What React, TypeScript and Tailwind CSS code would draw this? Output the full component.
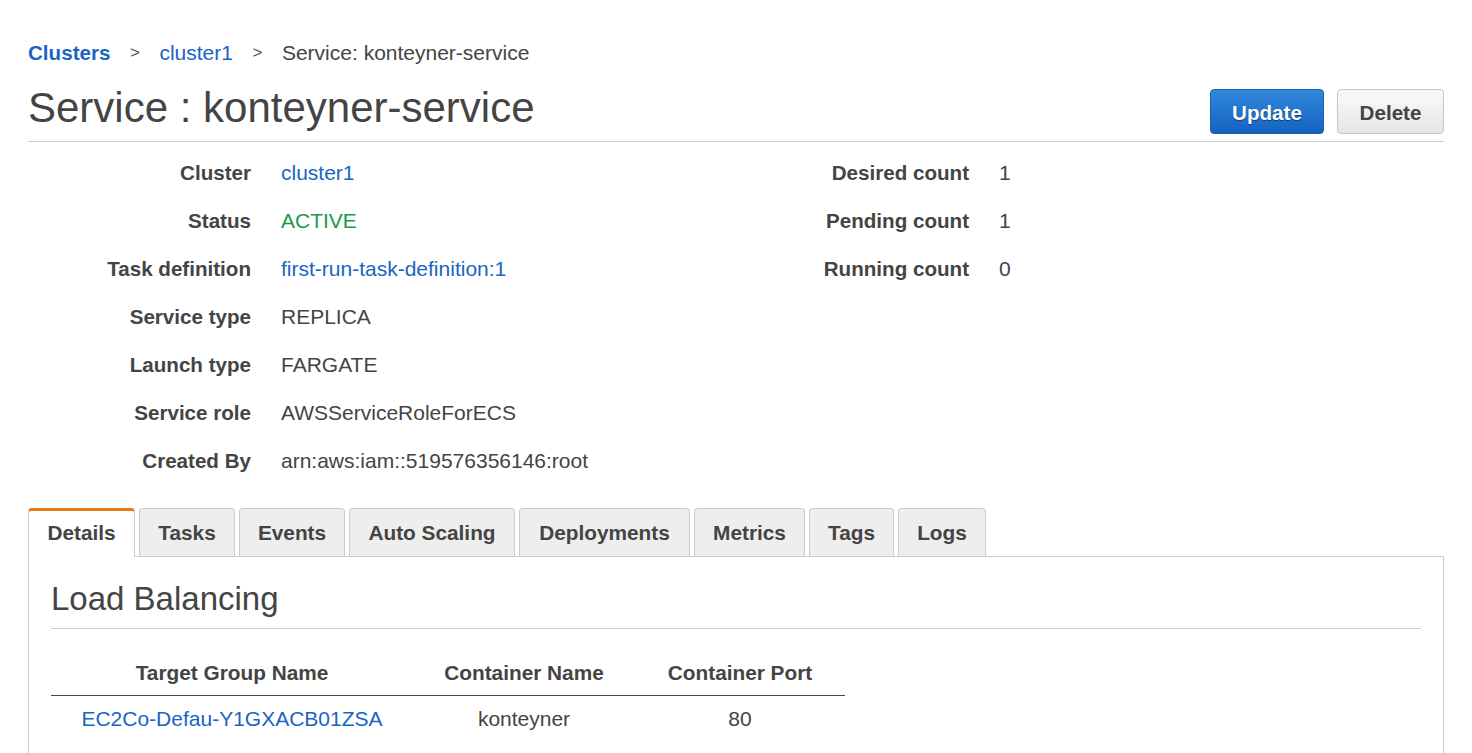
import React from "react";

const leftRows: [string, React.ReactNode][] = [
  ["Cluster", <span className="text-[#1a64c4]">cluster1</span>],
  ["Status", <span className="text-[#1d9a46]">ACTIVE</span>],
  ["Task definition", <span className="text-[#1a64c4]">first-run-task-definition:1</span>],
  ["Service type", "REPLICA"],
  ["Launch type", "FARGATE"],
  ["Service role", "AWSServiceRoleForECS"],
  ["Created By", "arn:aws:iam::519576356146:root"],
];

const rightRows: [string, string][] = [
  ["Desired count", "1"],
  ["Pending count", "1"],
  ["Running count", "0"],
];

const tabs: { label: string; w: string }[] = [
  { label: "Details", w: "w-[107px]" },
  { label: "Tasks", w: "w-[96px]" },
  { label: "Events", w: "w-[106px]" },
  { label: "Auto Scaling", w: "w-[166px]" },
  { label: "Deployments", w: "w-[171px]" },
  { label: "Metrics", w: "w-[111px]" },
  { label: "Tags", w: "w-[85px]" },
  { label: "Logs", w: "w-[88px]" },
];

export default function App() {
  return (
    <div
      className="min-h-[753px] bg-white px-[28px] pt-[41px] text-[#444] text-[21px]"
      style={{ fontFamily: '"Liberation Sans", Arial, sans-serif' }}
    >
      {/* breadcrumb */}
      <div className="flex h-[24px] items-center leading-[24px]">
        <span className="font-bold text-[20.6px] text-[#1a64c4]">Clusters</span>
        <span className="w-[49px] text-center text-[17px] text-[#555]">&gt;</span>
        <span className="text-[#1a64c4]">cluster1</span>
        <span className="w-[49px] text-center text-[17px] text-[#555]">&gt;</span>
        <span>Service: konteyner-service</span>
      </div>

      {/* header */}
      <div className="mt-[19px] flex h-[58px] items-start justify-between border-b border-[#ccc]">
        <h1 className="h-[48px] text-[42px] leading-[48px] text-[#444]">Service : konteyner-service</h1>
        <div className="mt-[5px] flex gap-[13px] text-[20.6px]">
          <button
            className="h-[45px] w-[114px] rounded-[4px] border border-[#1b5ea9] bg-gradient-to-b from-[#3187dc] to-[#1563c0] pt-[3px] font-bold text-white"
            style={{ textShadow: "0 1px 1px rgba(0,0,0,0.45)" }}
          >
            Update
          </button>
          <button className="h-[45px] w-[107px] rounded-[4px] border border-[#c6c6c6] bg-gradient-to-b from-[#fafafa] to-[#e6e6e6] pt-[3px] font-bold text-[#444]">
            Delete
          </button>
        </div>
      </div>

      {/* details */}
      <div className="flex pt-[7px]">
        <div className="grid w-[692px] grid-cols-[223px_1fr] gap-x-[30px]">
          {leftRows.map(([k, v]) => (
            <React.Fragment key={k}>
              <div className="h-[48px] text-right font-bold text-[20.6px] leading-[48px]">{k}</div>
              <div className="h-[48px] leading-[48px]">{v}</div>
            </React.Fragment>
          ))}
        </div>
        <div className="grid grid-cols-[249px_1fr] content-start gap-x-[30px]">
          {rightRows.map(([k, v]) => (
            <React.Fragment key={k}>
              <div className="h-[48px] text-right font-bold text-[20.6px] leading-[48px]">{k}</div>
              <div className="h-[48px] leading-[48px]">{v}</div>
            </React.Fragment>
          ))}
        </div>
      </div>

      {/* tabs */}
      <div className="relative z-10 mt-[23px] flex gap-[4px] text-[20.8px]">
        {tabs.map((t, i) =>
          i === 0 ? (
            <div
              key={t.label}
              className={`${t.w} h-[49px] rounded-t-[4px] border-x border-t-[3px] border-x-[#ccc] border-t-[#e47911] bg-white pt-[10px] text-center font-bold leading-[24px] text-[#444]`}
            >
              {t.label}
            </div>
          ) : (
            <div
              key={t.label}
              className={`${t.w} h-[48px] rounded-t-[4px] border-x border-t border-[#ccc] bg-[#eee] pt-[12px] text-center font-bold leading-[24px] text-[#444]`}
            >
              {t.label}
            </div>
          )
        )}
      </div>

      {/* panel */}
      <div className="-mt-px border border-[#ccc] px-[22px] pt-[22px] pb-[40px]">
        <h2 className="h-[50px] border-b border-[#ccc] text-[33px] leading-[40px] text-[#444]">Load Balancing</h2>
        <table className="mt-[31px] w-[794px] border-collapse">
          <thead>
            <tr className="border-b border-[#444] text-[20.8px]">
              <th className="w-[362px] pt-[1px] pb-[10px] text-center font-bold leading-[24px]">Target Group Name</th>
              <th className="w-[222px] pt-[1px] pb-[10px] text-center font-bold leading-[24px]">Container Name</th>
              <th className="w-[210px] pt-[1px] pb-[10px] text-center font-bold leading-[24px]">Container Port</th>
            </tr>
          </thead>
          <tbody>
            <tr>
              <td className="pt-[11px] text-center leading-[24px] text-[#1a64c4]">EC2Co-Defau-Y1GXACB01ZSA</td>
              <td className="pt-[11px] text-center leading-[24px]">konteyner</td>
              <td className="pt-[11px] text-center leading-[24px]">80</td>
            </tr>
          </tbody>
        </table>
      </div>
    </div>
  );
}
